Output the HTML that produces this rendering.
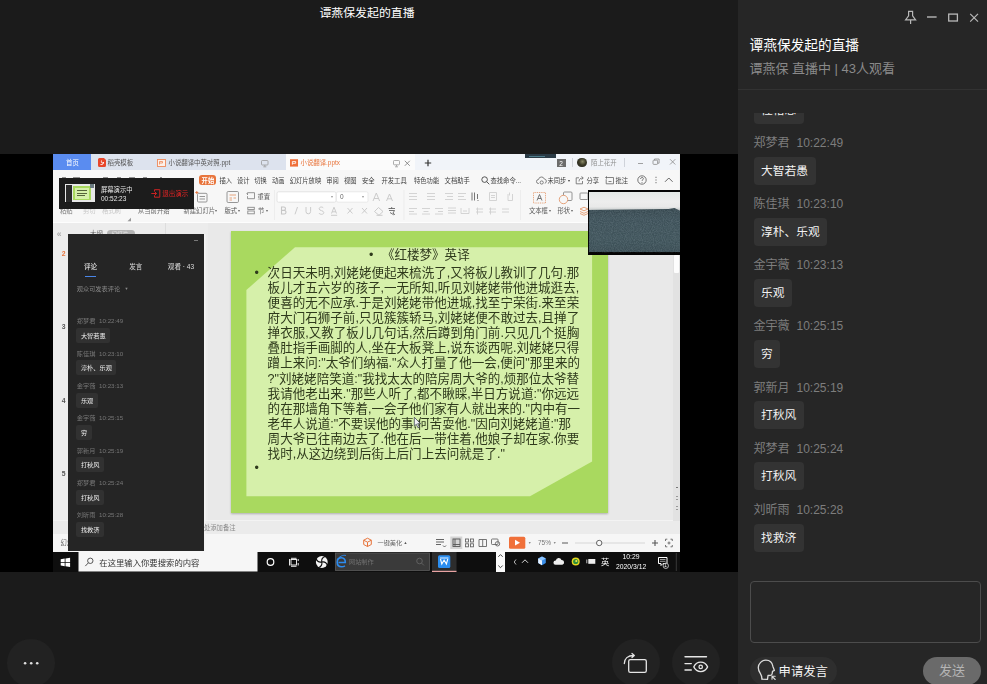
<!DOCTYPE html>
<html lang="zh-CN">
<head>
<meta charset="utf-8">
<title>谭燕保发起的直播</title>
<style>
*{box-sizing:border-box;margin:0;padding:0}
html,body{width:987px;height:684px;overflow:hidden;background:#1b1b1b}
body{position:relative;font-family:"Liberation Sans","Noto Sans CJK SC",sans-serif;color:#fff}
.abs{position:absolute}
#left{position:absolute;left:0;top:0;width:738px;height:684px;background:#1b1b1b}
#ltitle{position:absolute;left:0;top:4px;width:734px;text-align:center;font-size:11.9px;line-height:18px;color:#fff}
#video{position:absolute;left:0;top:154px;width:738px;height:418.4px;background:#000}
#share{position:absolute;left:53.3px;top:0;width:626.5px;height:418.4px;background:#f2f2f2;overflow:hidden}
.cbtn{position:absolute;width:47.600px;height:47.600px;border-radius:50%;background:#222222}
#right{position:absolute;left:738px;top:0;width:249px;height:684px;background:#262626}

#right .ico{position:absolute;top:0;left:0}
#rtitle{position:absolute;left:11.5px;top:35.5px;font-size:13.7px;line-height:20px;color:#fff;white-space:nowrap}
#rsub{position:absolute;left:11.4px;top:59px;font-size:13px;line-height:20px;color:#8a8a8a;white-space:nowrap}
#rdiv{position:absolute;left:0;top:89px;width:249px;height:1px;background:#323232}
#chat{position:absolute;left:0;top:113px;width:249px;height:460px;overflow:hidden}
.m{position:absolute;left:15.5px;height:61px;width:220px}
.m .n{position:absolute;left:0;top:0;font-size:12px;line-height:16px;color:#7d7d7d;white-space:nowrap}
.m .n span{margin-left:7px}
.m .b{position:absolute;left:0;top:21.5px;height:28px;padding:0 7.6px;border-radius:4px;background:#333333;font-size:11.75px;line-height:28px;color:#f2f2f2;white-space:nowrap}
#ta{position:absolute;left:12px;top:581px;width:231px;height:62px;border:1px solid #4c4c4c;border-radius:4px;background:#262626}
#apply{position:absolute;left:12px;top:657px;width:87px;height:28px;border-radius:14px;background:#2e2e2e}
#apply span{position:absolute;left:28.6px;top:0;font-size:12.3px;line-height:30px;color:#f5f5f5;white-space:nowrap}
#send{position:absolute;left:185px;top:657px;width:58px;height:28px;border-radius:14px;background:#6a6a6a;text-align:center;font-size:13px;line-height:27px;color:#b5b5b5}

#sw{position:absolute;left:-53.3px;top:-154px;width:987px;height:684px;color:#444;filter:blur(0.4px);will-change:transform}
#sw div,#sw span,#sw svg{position:absolute}
#sw .t{white-space:nowrap;line-height:10px;font-size:6.3px}
/* tab bar */
#tabbar{left:53px;top:154px;width:626px;height:16px;background:#f1f4f9}
#tabs-bg{left:53px;top:154px;width:233px;height:16px;background:#dde3ee}
#tab-home{left:53px;top:154px;width:37.8px;height:16px;background:#5a8cf0}
#tab-act{left:285.5px;top:154px;width:129px;height:17px;background:#fbfbfb}
#menurow{left:53px;top:170px;width:626px;height:52px;background:#f7f7f7}
#ribbon-line{left:53px;top:221.8px;width:626px;height:1.3px;background:#fdfdfd}
#work{left:53px;top:222.5px;width:626px;height:298px;background:#e9e9e9}
#thumbs{left:53px;top:223px;width:155px;height:310px;background:#ececec}
#notes{left:53px;top:520.3px;width:627px;height:13.5px;background:#ebebeb;border-top:0.8px solid #f3f3f3}
#status{left:53px;top:533.5px;width:627px;height:19px;background:#f6f6f6}
#taskbar{left:53px;top:551.5px;width:627px;height:22px;background:#0e0e0e}
#slide{left:230.6px;top:230.5px;width:377.2px;height:282px;background:#a9d95f;box-shadow:0 0.5px 2px rgba(0,0,0,.25)}
#slide-in{left:0;top:0;width:377.2px;height:282px;background:#d6f0aa;clip-path:polygon(64.4px 16.8px,361.5px 16.8px,361.5px 231px,299.4px 265.7px,15.8px 265.7px,15.8px 59.4px)}
#stitle{left:369px;top:248.2px;font-size:12.55px;line-height:15px;color:#2f3a1c;white-space:nowrap}
.sl{left:267.6px;font-size:12.55px;line-height:15px;color:#2f3a1c;white-space:nowrap}
.bul{font-size:12.5px;line-height:15px;color:#2f3a1c}

.tt{font-size:6.4px;line-height:10px;white-space:nowrap;color:#555;margin-top:0.9px}
.mt{font-size:6.3px;line-height:10px;white-space:nowrap;color:#3c3c3c;top:175.8px}
.rt{font-size:6.3px;line-height:10px;white-space:nowrap;color:#555;top:205.8px}

.ig{stroke:#c4c4c4;fill:none;stroke-width:0.9}
#ovl{left:59px;top:178.400px;width:135.300px;height:30.800px;background:#1c1c1c}
#cam{left:588.400px;top:189.600px;width:92px;height:65px;background:#050505;overflow:hidden}
#cam-wall{left:0.150px;top:2.900px;width:91.850px;height:19px;background:linear-gradient(180deg,#e3e8e6 0,#ededed 50%,#e9e9e9 78%,#d6d9d9 88%,#a9b0b2 100%)}
#cam-floor{left:0.150px;top:18.500px;width:91.850px;height:44.300px;background:linear-gradient(180deg,#37484f 0,#3e5159 25%,#3f535a 70%,#3a4d54 100%);clip-path:polygon(0 1.800px,80px 0.900px,86px 0px,91.600px 2.600px,91.600px 100%,0 100%)}
#ichat{left:68.200px;top:233.900px;width:135.700px;height:317.600px;background:#252525;box-shadow:1.6px 0 0 #f3f3f3}
.in{font-size:6.2px;line-height:9px;color:#777;white-space:nowrap;left:76.800px}
.ib{left:76.400px;height:15.100px;border-radius:2px;background:#313131;font-size:6.2px;line-height:15px;color:#f0f0f0;white-space:nowrap;padding:0 4.5px}
.sn{font-size:6.800px;line-height:8px;color:#777;left:61.800px;font-weight:bold}
</style>
</head>
<body>
<div id="left">
  <div id="ltitle">谭燕保发起的直播</div>
  <div id="video">
    <div id="share">
    <div id="sw">
<div id="tabbar"></div><div id="tabs-bg"></div><div id="tab-home"></div><div id="tab-act"></div>
<div id="menurow"></div><div id="ribbon-line"></div><div id="work"></div><div id="thumbs"></div><div id="notes"></div><div id="status"></div><div id="taskbar"></div>
<div id="slide"><div id="slide-in"></div></div>
<div id="stitle">•&nbsp;&nbsp;<span style="position:static;margin-left:1.5px">《红楼梦》英译</span></div>
<div class="bul" style="left:254.5px;top:266px">•</div><div class="bul" style="left:254.5px;top:460.5px">•</div>
<div class="sl" style="top:266px">次日天未明,刘姥姥便起来梳洗了,又将板儿教训了几句.那</div><div class="sl" style="top:281px">板儿才五六岁的孩子,一无所知,听见刘姥姥带他进城逛去,</div><div class="sl" style="top:296px">便喜的无不应承.于是刘姥姥带他进城,找至宁荣街.来至荣</div><div class="sl" style="top:311px">府大门石狮子前,只见簇簇轿马,刘姥姥便不敢过去,且掸了</div><div class="sl" style="top:326px">掸衣服,又教了板儿几句话,然后蹲到角门前.只见几个挺胸</div><div class="sl" style="top:341px">叠肚指手画脚的人,坐在大板凳上,说东谈西呢.刘姥姥只得</div><div class="sl" style="top:356px">蹭上来问:"太爷们纳福."众人打量了他一会,便问"那里来的</div><div class="sl" style="top:372px">?"刘姥姥陪笑道:"我找太太的陪房周大爷的,烦那位太爷替</div><div class="sl" style="top:387px">我请他老出来."那些人听了,都不瞅睬,半日方说道:"你远远</div><div class="sl" style="top:402px">的在那墙角下等着,一会子他们家有人就出来的."内中有一</div><div class="sl" style="top:417px">老年人说道:"不要误他的事,何苦耍他."因向刘姥姥道:"那</div><div class="sl" style="top:432px">周大爷已往南边去了.他在后一带住着,他娘子却在家.你要</div><div class="sl" style="top:447px">找时,从这边绕到后街上后门上去问就是了."</div>
<div class="tt" style="left:66px;top:157.3px;color:#fff">首页</div>
<svg style="left:98px;top:158px" width="8" height="9" viewBox="0 0 8 9"><path d="M1.5 0h4.5l2 2v5.500a1.500 1.500 0 0 1-1.500 1.500h-5a1.500 1.500 0 0 1-1.500-1.500v-6a1.500 1.500 0 0 1 1.500-1.500z" fill="#e8472b"/><path d="M2.500 6.500c2 0.500 3.500-1 3-2.500-1 2-2.500 1-2-1.500" stroke="#fff" stroke-width="0.900" fill="none"/></svg>
<div class="tt" style="left:107.5px;top:157.3px">稻壳模板</div>
<svg style="left:157px;top:158.500px" width="9" height="8" viewBox="0 0 9 8"><rect x="0.500" y="0.500" width="8" height="7" fill="#fdf1ea" stroke="#ee8a5a" stroke-width="0.900"/><path d="M2.500 5.500v-3h3v1.500h-3" stroke="#ee8a5a" stroke-width="0.800" fill="none"/></svg>
<div class="tt" style="left:168.5px;top:157.3px">小说翻译中英对照.ppt</div>
<svg style="left:260.500px;top:159.500px" width="8" height="8" viewBox="0 0 8 8" fill="none" stroke="#999" stroke-width="0.800"><rect x="0.500" y="0.500" width="6.500" height="4.500" rx="0.800"/><path d="M3.800 5v1.500M2.300 6.800h3"/></svg>
<svg style="left:290px;top:159.300px" width="8.500" height="8" viewBox="0 0 9 8"><rect x="0" y="0" width="8.500" height="7.800" fill="#f0703a"/><path d="M2.500 5.800v-3.300h3.500v1.800h-3.500" stroke="#fff" stroke-width="0.900" fill="none"/></svg>
<div class="tt" style="left:300.5px;top:157.3px;color:#e8743b">小说翻译.pptx</div>
<svg style="left:393px;top:159.500px" width="8" height="8" viewBox="0 0 8 8" fill="none" stroke="#999" stroke-width="0.800"><rect x="0.500" y="0.500" width="6" height="4.300" rx="0.800"/><path d="M3.500 5v1.500M2 6.800h3"/></svg>
<svg style="left:404px;top:159.500px" width="7" height="7" viewBox="0 0 7 7" fill="none" stroke="#777" stroke-width="0.800"><path d="M0.800 0.800l5 5M5.800 0.800l-5 5"/></svg>
<svg style="left:423.500px;top:159px" width="8" height="8" viewBox="0 0 8 8" fill="none" stroke="#333" stroke-width="1.200"><path d="M4 0.800v6.400M0.800 4h6.400"/></svg>
<div style="left:525px;top:154px;width:31px;height:4.200px;background:#2a3a45"></div><div style="left:529px;top:156px;width:16px;height:1px;background:#4f7d8c"></div>
<div style="left:556.500px;top:159px;width:9.500px;height:7.700px;background:#6c6c6c"></div><div class="tt" style="left:559.3px;top:157.8px;color:#fff;font-size:6.5px">2</div>
<div style="left:572px;top:158px;width:0.600px;height:9px;background:#cfd3da"></div><div style="left:624px;top:158px;width:0.600px;height:9px;background:#cfd3da"></div>
<div style="left:577px;top:157.800px;width:9.600px;height:9.600px;border-radius:50%;background:radial-gradient(circle at 55% 40%,#8a8a6a 0,#3a3a28 45%,#222 100%)"></div>
<div class="tt" style="left:591px;top:157.5px;color:#8f8f8f">陌上花开</div>
<svg style="left:636px;top:157px" width="42" height="10" viewBox="0 0 42 10" fill="none" stroke="#8a8a8a" stroke-width="0.800"><path d="M2 6.500h5"/><rect x="17" y="3.200" width="4.600" height="4.200" rx="0.800"/><path d="M18.500 3.200v-1.200h4.600v4.200h-1.500"/><path d="M34 2.200l5.300 5.300M39.300 2.200l-5.300 5.300"/></svg>
<div style="left:199.300px;top:174.800px;width:16.700px;height:10.600px;border-radius:3px;background:#e8743b"></div><div class="mt" style="left:201.6px;color:#fff;font-weight:bold">开始</div>
<div class="mt" style="left:219.5px">插入</div><div class="mt" style="left:237px">设计</div><div class="mt" style="left:254.3px">切换</div><div class="mt" style="left:272px">动画</div><div class="mt" style="left:289.7px">幻灯片放映</div><div class="mt" style="left:326.2px">审阅</div><div class="mt" style="left:344px">视图</div><div class="mt" style="left:362px">安全</div><div class="mt" style="left:381.5px">开发工具</div><div class="mt" style="left:414px">特色功能</div><div class="mt" style="left:444.6px">文档助手</div>
<svg style="left:481px;top:175.500px" width="9" height="9" viewBox="0 0 9 9" fill="none" stroke="#444" stroke-width="0.900"><circle cx="3.600" cy="3.600" r="2.800"/><path d="M5.700 5.700l2.600 2.600"/></svg><div class="mt" style="left:490.5px">查找命令...</div>
<svg style="left:536px;top:175.500px" width="11" height="9" viewBox="0 0 11 9" fill="none" stroke="#666" stroke-width="0.800"><path d="M3 7.500h-0.500a2 2 0 0 1 0-4a3 3 0 0 1 5.800-0.500a2.200 2.200 0 0 1 0.500 4.300"/><circle cx="5.700" cy="6.500" r="1.600"/></svg><div class="mt" style="left:547.5px">未同步</div><div class="mt" style="left:567.5px;font-size:4px">▾</div><svg style="left:575px;top:175.500px" width="10" height="9" viewBox="0 0 10 9" fill="none" stroke="#666" stroke-width="0.800"><path d="M4 1.800h-2.800v6h6.300v-2.800M4 5.500c0-2.500 1.500-3.500 4-3.500M6.500 0.500l1.800 1.500-1.800 1.500"/></svg><div class="mt" style="left:586.5px">分享</div><svg style="left:605px;top:175.500px" width="10" height="9" viewBox="0 0 10 9" fill="none" stroke="#666" stroke-width="0.800"><path d="M2.500 1.500h6v6.300h-7.300v-4.500"/><path d="M0.300 1.500h2.400M1.500 0.300v2.400M3.500 5.500h3"/></svg><div class="mt" style="left:615.5px">批注</div><svg style="left:636.500px;top:175px" width="38" height="10" viewBox="0 0 38 10" fill="none" stroke="#555" stroke-width="0.800"><circle cx="5" cy="5" r="4.200"/><path d="M3.600 4c0-2 2.800-2 2.800-0.300c0 1-1.400 1-1.400 2.200M5 7v0.800"/><path d="M19 1.800v1M19 4.500v1M19 7.200v1" stroke-width="1"/><path d="M28 6.800l3.800-3.800 3.800 3.800" stroke-width="0.900"/></svg>
<div class="rt" style="left:60px;color:#777">粘贴</div><div class="rt" style="left:83px;color:#c8c8c8">剪切</div><div class="rt" style="left:102px;color:#c8c8c8">格式刷</div><div class="rt" style="left:138px;color:#666">从当前开始</div><div class="rt" style="left:183.500px;color:#666">新建幻灯片</div><div class="rt" style="left:215.200px;font-size:4px;color:#666">▾</div><div class="rt" style="left:224.500px;color:#555">版式</div><div class="rt" style="left:237.800px;font-size:4px;color:#666">▾</div><div class="rt" style="left:258px;color:#666">节</div><div class="rt" style="left:266px;font-size:4px;color:#666">▾</div><div class="rt" style="left:257.500px;top:192px;color:#555">重置</div><div class="rt" style="left:529px;color:#555">文本框</div><div class="rt" style="left:548.500px;font-size:4px;color:#666">▾</div><div class="rt" style="left:557.500px;color:#555">形状</div><div class="rt" style="left:570.500px;font-size:4px;color:#666">▾</div>
<svg style="left:54px;top:188px" width="626" height="34" viewBox="54 188 626 34" fill="none" stroke-width="0.900">
<g stroke="#8a8a8a"><rect x="197.500" y="193.300" width="9.500" height="8.700" rx="1"/><path d="M199.500 196.500h5.500M199.500 199h5.500"/><path d="M195.300 192.500h3M196.800 191v3" stroke="#e8743b"/><rect x="227" y="191.500" width="11.500" height="11" rx="1.200"/><path d="M247.500 194.500v-1.800h7v6h-7v-2.500M246.500 193.500l1.500 1.500"/><rect x="247.800" y="207.300" width="6.500" height="2.200"/><rect x="247.800" y="211" width="6.500" height="2.800"/></g>
<g stroke="#e39a6e"><path d="M229.500 195h6.500M229.500 198h2.500M233.500 198h2.500M229.500 200h2.500"/></g>
<rect x="277" y="191.800" width="59" height="10.400" rx="1.500" fill="#fff" stroke="#e0e0e0"/><rect x="336.500" y="191.800" width="31.500" height="10.400" rx="1.500" fill="#fff" stroke="#e6e6e6"/>
<g stroke="#c6c6c6"><path d="M373 201l3.300-8 3.300 8M374.200 198.500h4.200M386.500 201l3-7 3 7M387.600 198.800h3.800"/>
<path d="M281.500 207v7h2.700a1.800 1.800 0 0 0 0-3.600h-2.700h2.300a1.700 1.700 0 0 0 0-3.400z" stroke-width="1.100"/><path d="M297.500 207l-2.500 7.300"/><path d="M306 207v4.500a2.300 2.300 0 0 0 4.600 0v-4.500"/><path d="M323.500 208.200c-1-1.800-4.300-1.500-4.300 0.600 0 2.300 4.600 1.400 4.600 3.800 0 2.100-3.800 2.300-4.900 0.400"/><path d="M331.500 213.500l2.500-6.300 2.500 6.300M332.300 211.800h3.400M331 215.300h6.200"/>
<path d="M347.500 208l5 5.500M352.500 208l-5 5.500M362 208l5 5.500M367 208l-5 5.500"/><path d="M374.500 211.500l4-4 4.500 4-4 3.800zM376.500 215.300h6"/></g>
<g stroke="#cfcfcf"><path d="M409 193.500h8M409 196.500h8M409 199.500h8M427 193.500h8M427 196.500h8M427 199.500h8M445 193.500h8M447 196.500h6M445 199.500h8M458 193.500h8M458 196.500h6M458 199.500h8M489.500 192.500h7v8h-7zM491 195.500h4M491 197.500h4M508 194v6.500h4.500v-6.500M509.500 192.500v3"/>
<path d="M409 208.500h8M409 211.500h5M409 214h8M422 208.500h8M423.500 211.500h5M422 214h8M435 208.500h8M438 211.500h5M435 214h8M448 208h8M448 210.500h8M448 213h8M461 208v5.500h8v-5.500M463 211h4M476 209h7M476 212h7M477.500 207.500v7M489 209h7M489 212h7M490.500 207.500v7M502 209h7M502 212h7"/></g>
<g stroke="#777"><path d="M472 192.500v8M474.500 192.500v8M477.500 194v5M477.500 200.500h1" stroke-width="1"/></g>
<g stroke="#555"><path d="M388.500 208.500h6.500M391.700 207v1.500M389 210.500h5.500l-1.500 2.500 2 1.800M390 212.500l3.800 2.400" stroke-width="0.800"/></g>
<g stroke="#e39a6e" stroke-dasharray="1 0.800"><rect x="533.500" y="192.500" width="12" height="10.500"/></g>
<g stroke="#666"><path d="M537 200.500l2.500-6 2.500 6M538 198.500h3"/></g>
<g stroke="#888"><rect x="563.500" y="192" width="8.500" height="8.500" rx="1"/><rect x="580" y="193" width="8" height="6.500" rx="0.800"/></g>
<circle cx="563.500" cy="199.500" r="4.200" stroke="#e39a6e" fill="#f7f7f7"/>
<g stroke="#e39a6e"><path d="M580 209l4-1.800 4 1.800-4 1.800zM580 211.500l4 1.800 4-1.800M580 213.500l4 1.800 4-1.800"/></g>
<path d="M274.500 190v30M404 190v30M520.500 190v30" stroke="#e6e6e6" stroke-width="0.600"/>
</svg>
<div class="rt" style="left:340px;top:191.800px;color:#666;font-size:6.5px">0</div><div class="rt" style="left:331px;top:192px;font-size:3.500px;color:#999">▾</div><div class="rt" style="left:362px;top:192px;font-size:3.500px;color:#999">▾</div><div class="rt" style="left:127.500px;top:214.500px;font-size:3.500px;color:#999">◢</div>
<div class="sn" style="left:56.800px;top:229.800px;color:#aaa;font-size:8.500px">«</div><div class="tt" style="left:90px;top:228px;color:#666">大纲</div><div style="left:106.500px;top:229.800px;width:28.300px;height:7px;border-radius:3.500px;background:#b4b4b4"></div><div class="tt" style="left:111.500px;top:227.800px;color:#e6e6e6;font-size:5.600px">幻灯片</div><div style="left:165.200px;top:223px;width:0.600px;height:12px;background:#ddd"></div><div class="sn" style="top:250.2px;color:#e8743b">2</div><div class="sn" style="top:323.2px;color:#555">3</div><div class="sn" style="top:397px;color:#555">4</div><div class="sn" style="top:470.4px;color:#555">5</div>
<div id="ichat"></div><div style="left:194px;top:240px;width:4px;height:0.700px;background:#777"></div><div class="in" style="left:84px;top:262.100px;color:#fff;font-size:6.600px">评论</div><div style="left:85px;top:275.500px;width:10.600px;height:1.100px;background:#4a86e8"></div><div class="in" style="left:129.200px;top:262.100px;color:#ddd;font-size:6.600px">发言</div><div class="in" style="left:167.800px;top:262.100px;color:#ddd;font-size:6.600px">观看 · 43</div><div class="in" style="top:283.700px;color:#8a8a8a">观众可发表评论</div><div class="in" style="left:124.500px;top:283.900px;font-size:4px;color:#8a8a8a">▼</div>
<div class="in" style="top:316.4px">郑梦君<span style="position:static;margin-left:3.700px">10:22:49</span></div><div class="ib" style="top:328.1px">大智若愚</div><div class="in" style="top:348.7px">陈佳琪<span style="position:static;margin-left:3.700px">10:23:10</span></div><div class="ib" style="top:360.4px">淳朴、乐观</div><div class="in" style="top:381.0px">金宇薇<span style="position:static;margin-left:3.700px">10:23:13</span></div><div class="ib" style="top:392.7px">乐观</div><div class="in" style="top:413.3px">金宇薇<span style="position:static;margin-left:3.700px">10:25:15</span></div><div class="ib" style="top:425.0px">穷</div><div class="in" style="top:445.6px">郭新月<span style="position:static;margin-left:3.700px">10:25:19</span></div><div class="ib" style="top:457.3px">打秋风</div><div class="in" style="top:477.9px">郑梦君<span style="position:static;margin-left:3.700px">10:25:24</span></div><div class="ib" style="top:489.6px">打秋风</div><div class="in" style="top:510.2px">刘昕雨<span style="position:static;margin-left:3.700px">10:25:28</span></div><div class="ib" style="top:521.9px">找救济</div>
<div id="ovl"></div><div style="left:64.600px;top:183.700px;width:30px;height:19.600px;background:#e8e8e8"></div><div style="left:65.500px;top:184.500px;width:6px;height:17.500px;background:#2a2a2a"></div><div style="left:73px;top:186px;width:18px;height:14px;background:#a9d95f"></div><div style="left:75px;top:187.500px;width:14px;height:11px;background:#d6f0aa"></div><div style="left:77px;top:190px;width:10px;height:0.800px;background:#55643a"></div><div style="left:77px;top:192.500px;width:10px;height:0.800px;background:#55643a"></div><div style="left:77px;top:195px;width:8px;height:0.800px;background:#55643a"></div><div style="left:90px;top:184px;width:4px;height:3.500px;background:#6b7b80"></div><div style="left:64.600px;top:201.600px;width:30px;height:1.700px;background:#1a1a1a"></div><div class="in" style="left:101px;top:185.200px;color:#e8e8e8;font-size:6.300px">屏幕演示中</div><div class="in" style="left:101px;top:193.600px;color:#e8e8e8;font-size:6.500px">00:52:23</div><svg style="left:150.500px;top:189px" width="10" height="9" viewBox="0 0 10 9" fill="none" stroke="#e02424" stroke-width="0.900"><path d="M3.500 2.500v-1.800h5.300v7.500h-5.300v-1.800M0.300 4.500h5M3.800 2.800l1.700 1.700-1.700 1.700"/></svg><div class="in" style="left:162.300px;top:188.900px;color:#e02424;font-size:6.500px">退出演示</div>
<div id="cam"><div id="cam-wall"></div><div id="cam-floor"><svg width="92" height="45" style="left:0;top:0;opacity:.3"><filter id="nz" x="0" y="0" width="100%" height="100%"><feTurbulence type="fractalNoise" baseFrequency="0.9" numOctaves="2" seed="3"/><feColorMatrix type="matrix" values="0 0 0 0 0.42  0 0 0 0 0.52  0 0 0 0 0.57  1.2 0 0 0 -0.35"/></filter><rect width="92" height="45" filter="url(#nz)"/></svg></div></div>
<div style="left:673.300px;top:254.500px;width:7px;height:266px;background:#e2e2e2"></div><div style="left:673.800px;top:255px;width:5px;height:18px;background:#fdfdfd;border-radius:1px"></div><div style="left:676.200px;top:487px;width:1.600px;height:1.400px;background:#777"></div><div style="left:676.200px;top:496px;width:1.600px;height:1.400px;background:#999"></div><div style="left:676.200px;top:499px;width:1.600px;height:1.400px;background:#999"></div><div style="left:676.200px;top:506px;width:1.600px;height:1.400px;background:#999"></div><div style="left:676.200px;top:509px;width:1.600px;height:1.400px;background:#999"></div>
<div style="left:62px;top:176.600px;width:4px;height:1.600px;background:#777;opacity:.8"></div><div style="left:73px;top:176.600px;width:7px;height:1.600px;background:#777;opacity:.8"></div><div style="left:103px;top:176.600px;width:5px;height:1.600px;background:#777;opacity:.8"></div><div style="left:117px;top:176.600px;width:4px;height:1.600px;background:#777;opacity:.8"></div><div style="left:129px;top:176.600px;width:6px;height:1.600px;background:#777;opacity:.8"></div><div style="left:143px;top:176.600px;width:4px;height:1.600px;background:#777;opacity:.8"></div><div style="left:160px;top:176.600px;width:2px;height:1.600px;background:#777;opacity:.8"></div>
<div class="tt" style="left:204px;top:522.500px;color:#8a8a8a;font-size:6.300px">处添加备注</div><div class="tt" style="left:60.400px;top:537.500px;color:#666;font-size:6.300px;width:7.600px;overflow:hidden">幻灯片 2 / 20</div><svg style="left:360px;top:533px" width="320" height="19" viewBox="360 533 320 19" fill="none" stroke-width="0.900">
<g stroke="#e8743b"><path d="M367.500 538.200l3.800 2v4.300l-3.800 2-3.800-2v-4.300zM363.700 540.200l3.800 2 3.800-2M367.500 542.200v4.300" stroke-width="1"/></g>
<g stroke="#555"><path d="M436 539.500h8M436 542h8M436 544.500h5M443 545.500l1.500 1.500 1.500-1.500" /></g>
<rect x="450.300" y="536.500" width="12" height="12.500" fill="#d4d4d4" stroke="none"/>
<g stroke="#555"><rect x="453" y="539" width="7" height="7.500"/><path d="M455 539v7.500M453 544.500h7"/></g>
<g stroke="#666"><rect x="465.500" y="539" width="3" height="3"/><rect x="470.500" y="539" width="3" height="3"/><rect x="465.500" y="543.800" width="3" height="3"/><rect x="470.500" y="543.800" width="3" height="3"/>
<path d="M479 539.500h7.500v7h-7.500zM482.700 539.500v7"/><rect x="491.500" y="539" width="6.500" height="5.500" rx="0.800"/><circle cx="497.500" cy="543.800" r="2.200"/></g>
<rect x="509" y="536.700" width="16.300" height="12" rx="1.500" fill="#f0703a" stroke="none"/><path d="M515 539.800l5 2.900-5 2.900z" fill="#fff" stroke="none"/>
<g stroke="#888"><path d="M562 543h6" stroke-width="1.100" stroke="#666"/><path d="M575 543h70" stroke="#d2d2d2"/><circle cx="599.200" cy="543" r="2.700" fill="#fafafa" stroke="#555"/><path d="M652 543h6M655 540v6" stroke="#555" stroke-width="1.100"/>
<path d="M665.500 541v-1.800h1.800M670.500 539.200h1.800v1.800M672.300 545v1.800h-1.800M667.300 546.800h-1.800v-1.800" stroke="#666"/><circle cx="669" cy="543" r="1" stroke="#666"/></g>
</svg>
<div class="tt" style="left:377.500px;top:537.200px;color:#666;font-size:6.200px">一键美化</div><div class="tt" style="left:403.500px;top:537.500px;color:#555;font-size:4px">▲</div><div class="tt" style="left:528px;top:537.500px;color:#888;font-size:3.500px">▼</div><div class="tt" style="left:538px;top:537.200px;color:#777;font-size:6.500px">75%</div><div class="tt" style="left:553px;top:537.500px;color:#888;font-size:3.500px">▼</div>
<svg style="left:54px;top:551px" width="626" height="22" viewBox="54 551 626 22" fill="none">
<path d="M60.700 559.200l4-0.600v3.500h-4zM65.500 558.500l4.600-0.700v4.300h-4.600zM60.700 562.800h4v3.400l-4-0.600zM65.500 562.800h4.600v4.200l-4.600-0.700z" fill="#fff"/>
<rect x="78.500" y="552" width="179" height="19.500" fill="#f6f6f6"/>
<circle cx="90.300" cy="560.800" r="2.700" stroke="#444" stroke-width="0.900"/><path d="M88.300 562.900l-3 3.200" stroke="#444" stroke-width="0.900"/>
<circle cx="270.500" cy="562" r="3.300" stroke="#fff" stroke-width="1.200"/>
<g stroke="#fff" stroke-width="0.900"><rect x="291" y="559.500" width="5.500" height="5.500"/><path d="M289.500 559v6.500M298.200 559v2M298.200 563v2.500M291 558.300h5.500M291 566.300h5.500"/></g>
<circle cx="321.800" cy="562" r="5.900" fill="#f4f4f4"/><g stroke="#0e0e0e" stroke-width="1.100" fill="none"><path d="M321.800 562c-0.500-2.500 1-4.800 3.300-5.600M321.800 562c2.500-0.500 4.800 1 5.600 3.300M321.800 562c0.500 2.500-1 4.800-3.300 5.600M321.800 562c-2.500 0.500-4.800-1-5.600-3.300"/></g>
<rect x="335.500" y="553" width="94" height="17.500" fill="#3a3a3a" stroke="#5a5a5a" stroke-width="0.800"/>
<path d="M338.500 562.500h6.800c0.200-3-1.500-4.800-3.800-4.800-2.600 0-4.300 2-4.300 4.600 0 2.700 1.800 4.500 4.400 4.500 1.400 0 2.500-0.400 3.300-1" stroke="#2d8cf0" stroke-width="1.600"/><path d="M337 560c2-3.500 6.500-5.500 9-4.500" stroke="#2d8cf0" stroke-width="0.900"/>
<circle cx="419.500" cy="561" r="2.800" stroke="#6a6a6a" stroke-width="0.800"/><path d="M421.600 563.100l2.300 2.300" stroke="#6a6a6a" stroke-width="0.800"/>
<rect x="432" y="552" width="24.500" height="19.500" fill="#2c2c2c"/><rect x="432" y="570.800" width="24.500" height="1.200" fill="#e9a3a3"/>
<rect x="438" y="555.200" width="12.300" height="12.700" rx="1.500" fill="#2b8ef0"/><path d="M440.500 559l1.300 5 2.300-4 2.300 4 1.400-5" stroke="#fff" stroke-width="1.100"/><path d="M440 558h8.500" stroke="#fff" stroke-width="0.900"/>
<rect x="496" y="550" width="9" height="22" fill="#fafafa"/><path d="M498.300 556.800l2.200-2.200 2.200 2.200M498.300 565.500l2.200 2.200 2.200-2.200" stroke="#333" stroke-width="0.900"/>
<path d="M516 559.500l-1.800 2.500 1.800 2.500" stroke="#ddd" stroke-width="0.800"/><path d="M522 562.800l3-3 3 3" stroke="#eee" stroke-width="0.900"/>
<path d="M542 556.500l3.800 2v4.500l-3.800 2.200-3.800-2.200v-4.500z" fill="#3b8ee8"/><path d="M542 556.500l3.800 2-3.800 2-3.800-2z" fill="#8cc4ff"/><path d="M542 560.500v4.700l-3.800-2.200v-4.500z" fill="#e8f2ff"/>
<path d="M555.500 564.800a2.200 2.200 0 0 1 0.300-4.400a3 3 0 0 1 5.700-0.500a2.500 2.500 0 0 1 0.800 4.900z" fill="#eee"/>
<circle cx="575.700" cy="561.500" r="4" fill="#e8d820"/><circle cx="575.700" cy="561.500" r="2.600" fill="#2f8f3a"/><circle cx="576.300" cy="561" r="1.100" fill="#f4e850"/>
<rect x="588.300" y="559" width="7" height="4.800" fill="#eee"/><path d="M586.800 559.500v3.800" stroke="#eee" stroke-width="0.800"/>
<path d="M658.500 557.500h8.500v6h-4l-2 2v-2h-2.500z" fill="none" stroke="#fff" stroke-width="1"/><path d="M660 559.500h5.500M660 561.300h5.500" stroke="#fff" stroke-width="0.600"/><circle cx="665.800" cy="565.800" r="2.700" fill="#1a1a1a" stroke="#eee" stroke-width="0.700"/>
<path d="M676.300 553v18" stroke="#555" stroke-width="0.600"/>
</svg>
<div class="tt" style="left:99.300px;top:556.800px;color:#333;font-size:8.350px;line-height:10px">在这里输入你要搜索的内容</div><div class="tt" style="left:349px;top:556.500px;color:#707070;font-size:6.200px">网站制作</div><div class="tt" style="left:601px;top:556px;color:#fff;font-size:8.300px">英</div><div class="tt" style="left:622.500px;top:551px;color:#fff;font-size:6.800px">10:29</div><div class="tt" style="left:616px;top:561px;color:#fff;font-size:6.800px">2020/3/12</div><div class="tt" style="left:664.300px;top:559.900px;color:#fff;font-size:4.500px">1</div>
<svg style="left:412px;top:415px" width="12" height="16" viewBox="412 415 12 16"><path d="M414.300 417.300v8.900l2-1.900 1.700 3.500 1.400-0.700-1.700-3.400h2.900z" fill="#f4f4f8" stroke="#2a3040" stroke-width="0.700"/></svg>
<!--SW3-->

</div>

    </div>
  </div>
  <div class="cbtn" style="left:7.200px;top:639.300px"></div>
  <div class="cbtn" style="left:612px;top:638.500px"></div>
  <div class="cbtn" style="left:672.300px;top:638.500px"></div>
  <svg style="position:absolute;left:0;top:630px" width="738" height="54" viewBox="0 630 738 54" fill="none" stroke="#e6e6e6" stroke-width="1.300" stroke-linecap="round" stroke-linejoin="round">
    <circle cx="25.100" cy="663.300" r="1.300" fill="#e0e0e0" stroke="none"/><circle cx="31.200" cy="663.300" r="1.300" fill="#e0e0e0" stroke="none"/><circle cx="37.200" cy="663.300" r="1.300" fill="#e0e0e0" stroke="none"/>
    <rect x="628.700" y="659.700" width="17.600" height="12.600" rx="1.600"/>
    <path d="M624.300 663.500c0-4.800 3.600-8 9.400-8M632 653.500l2.300 2-2.300 2"/>
    <path d="M685 656.700h21.500M685 663.600h6.300M685 670h6.300" stroke-width="1.400"/>
    <path d="M693.800 666.900c3-6.300 10.800-6.300 13.800 0c-3 6.300-10.800 6.300-13.800 0z"/><circle cx="700.700" cy="666.900" r="1.700"/>
  </svg>
</div>
<div id="right">

  <svg class="ico" width="249" height="30" viewBox="0 0 249 30" fill="none" stroke="#b8b8b8" stroke-width="1.2">
    <path d="M170.600 11.300h4v4.600l3 4h-10l3-4z M172.600 19.900v4.200"/>
    <path d="M189 17h9.600" stroke-width="1.400"/>
    <rect x="210.700" y="14.100" width="8.700" height="6.900" stroke-width="1.300"/>
    <path d="M232.2 13.8l7.8 7.8 M240 13.8l-7.8 7.8"/>
  </svg>
  <div id="rtitle">谭燕保发起的直播</div>
  <div id="rsub">谭燕保 直播中 | 43人观看</div>
  <div id="rdiv"></div>
  <div id="chat">
    <div class="m" style="top:-39px"><div class="n">金宇薇<span>10:22:41</span></div><div class="b">性格悲</div></div>
    <div class="m" style="top:22px"><div class="n">郑梦君<span>10:22:49</span></div><div class="b">大智若愚</div></div>
    <div class="m" style="top:83px"><div class="n">陈佳琪<span>10:23:10</span></div><div class="b">淳朴、乐观</div></div>
    <div class="m" style="top:144px"><div class="n">金宇薇<span>10:23:13</span></div><div class="b">乐观</div></div>
    <div class="m" style="top:205px"><div class="n">金宇薇<span>10:25:15</span></div><div class="b">穷</div></div>
    <div class="m" style="top:266.5px"><div class="n">郭新月<span>10:25:19</span></div><div class="b">打秋风</div></div>
    <div class="m" style="top:327.5px"><div class="n">郑梦君<span>10:25:24</span></div><div class="b">打秋风</div></div>
    <div class="m" style="top:389px"><div class="n">刘昕雨<span>10:25:28</span></div><div class="b">找救济</div></div>
  </div>
  <div id="ta"></div>
  <div id="apply"><svg width="32" height="28" viewBox="0 0 32 28" fill="none" stroke="#dcdcdc" stroke-width="1.3" stroke-linejoin="round" stroke-linecap="round" style="position:absolute;left:0;top:0"><path d="M11.8 22.2c0.3-2.6-0.4-4-1.5-5.8-1.3-2-2.1-3.6-2-5.9 0.2-4 3.400-7.3 7.600-7.300 3.800 0 6.400 2.500 7 6.200l1.500 4-1.900 0.900-0.300 2.200c-0.100 1.300-0.700 1.900-2 1.900l-2.200 0.100-0.500 3.800z"/><path d="M22 19.300h3.200M22 19.300v3M22.300 19.600l2.900 2.900" stroke-width="1.100"/></svg><span>申请发言</span></div>
  <div id="send">发送</div>

</div>
</body>
</html>
